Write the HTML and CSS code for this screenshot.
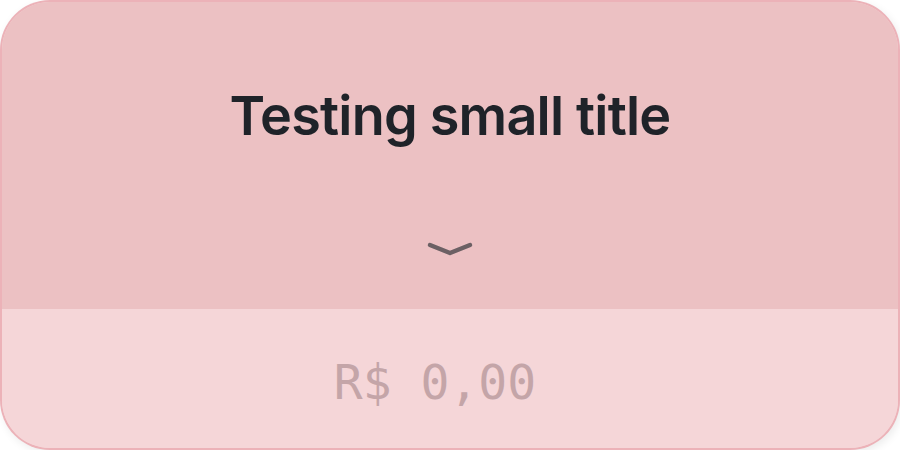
FILE: index.html
```html
<!DOCTYPE html>
<html>
<head>
<meta charset="utf-8">
<link rel="stylesheet" href="styles.css">
</head>
<body>
<div class="card">
  <div class="top">
    <h1 class="title">Testing small title</h1>
    <svg class="chevron" width="52" height="18" viewBox="0 0 52 18">
      <path d="M6 5 L26 13 L46 5" fill="none" stroke="#6c6064" stroke-width="4.5" stroke-linecap="round" stroke-linejoin="round"/>
    </svg>
  </div>
  <div class="bottom">
    <span class="amount">R$ 0,00</span>
  </div>
</div>
</body>
</html>
```
FILE: styles.css
```css
html, body {
  margin: 0;
  padding: 0;
  background: #ffffff;
}
.card {
  box-sizing: border-box;
  width: 900px;
  height: 450px;
  border-radius: 50px;
  border: 2px solid rgba(228, 150, 158, 0.55);
  overflow: hidden;
  display: flex;
  flex-direction: column;
  box-shadow: 2px 3px 8px rgba(0, 0, 0, 0.08);
  background: #f5d6d8;
}
.top {
  height: 307px;
  background: #ecc1c3;
  display: flex;
  flex-direction: column;
  align-items: center;
}
.title {
  margin: 79px 0 0 0;
  font-family: Inter, "Noto Sans", sans-serif;
  font-weight: 600;
  font-size: 54px;
  line-height: 70px;
  color: #1f2329;
  letter-spacing: -0.8px;
}
.chevron {
  margin-top: 89px;
}
.bottom {
  flex: 1;
  background: #f5d6d8;
  display: flex;
  align-items: center;
  justify-content: center;
}
.amount {
  font-family: "DejaVu Sans Mono", monospace;
  font-size: 48px;
  color: #c4a5a8;
  margin: 6px 30px 0 0;
}
```
